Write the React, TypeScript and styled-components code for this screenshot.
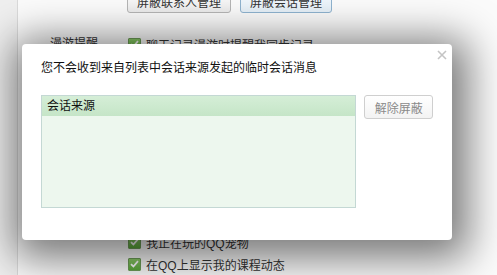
import React from 'react';
import styled, { createGlobalStyle } from 'styled-components';

const GlobalStyle = createGlobalStyle`
  html, body {
    margin: 0;
    padding: 0;
    background: #fbfbfb;
    overflow: hidden;
  }
  body {
    font-family: "Liberation Sans", "Noto Sans CJK SC", sans-serif;
    font-size: 12px;
    color: #333;
  }
`;

const Page = styled.div`
  position: relative;
  width: 497px;
  height: 275px;
  overflow: hidden;
  display: flex;
`;

const Sidebar = styled.div`
  width: 17px;
  flex: none;
  background: #efefef;
  border-right: 1px solid #dadada;
`;

const Settings = styled.div`
  flex: 1;
  display: flex;
  flex-direction: column;
  margin-top: -10px;
`;

const ButtonRow = styled.div`
  display: flex;
  gap: 9px;
  padding-left: 109px;
  height: 46px;
`;

const ManageButton = styled.button<{ $active?: boolean }>`
  height: 23px;
  padding: 0 9px;
  font: inherit;
  font-size: 12px;
  color: #333;
  border: 1px solid ${(p) => (p.$active ? '#8fb3cf' : '#b5b5b5')};
  border-radius: 3px;
  background: ${(p) =>
    p.$active ? 'linear-gradient(#f6fbff, #e6f0f8)' : 'linear-gradient(#ffffff, #ececec)'};
`;

const Section = styled.div`
  display: grid;
  grid-template-columns: 110px 1fr;
`;

const SectionLabel = styled.div`
  padding-left: 32px;
  line-height: 22px;
  color: #333;
`;

const OptionList = styled.div`
  display: flex;
  flex-direction: column;
`;

const Option = styled.label`
  display: flex;
  align-items: center;
  gap: 5px;
  height: 22px;
  color: #333;
`;

const Check = styled.span`
  width: 13px;
  height: 13px;
  flex: none;
  border-radius: 1px;
  background: linear-gradient(#8fcf6a, #5aa83a);
  border: 1px solid #6e9e58;
  box-sizing: border-box;
  display: flex;
  align-items: center;
  justify-content: center;
`;

const Overlay = styled.div`
  position: absolute;
  left: 22px;
  top: 44px;
  width: 430px;
  height: 196px;
  background: #fff;
  border-radius: 4px;
  box-shadow: 4px 7px 40px 12px rgba(0, 0, 0, 0.52);
  box-sizing: border-box;
  padding: 16px 19px;
  display: flex;
  flex-direction: column;
`;

const CloseButton = styled.button`
  position: absolute;
  top: 5px;
  right: 4px;
  width: 12px;
  height: 12px;
  padding: 0;
  border: 0;
  background: none;
  display: flex;
  align-items: center;
  justify-content: center;
`;

const Title = styled.div`
  font-size: 12px;
  line-height: 16px;
  color: #111;
  margin-bottom: 19px;
`;

const Body = styled.div`
  display: flex;
  align-items: flex-start;
  gap: 8px;
`;

const ListBox = styled.div`
  width: 318px;
  height: 113px;
  box-sizing: border-box;
  border: 1px solid #c4d8d4;
  background: #edf7ee;
`;

const ListHeader = styled.div`
  height: 20px;
  line-height: 20px;
  padding-left: 5px;
  color: #111;
  background: linear-gradient(#d5eed7, #c5e5c7);
`;

const UnblockButton = styled.button`
  width: 69px;
  height: 24px;
  font: inherit;
  font-size: 12px;
  color: #8a8a8a;
  border: 1px solid #cfcfcf;
  border-radius: 3px;
  background: linear-gradient(#ffffff, #f3f3f3);
`;

const CheckMark = () => (
  <svg width="9" height="8" viewBox="0 0 9 8">
    <path d="M1 4.2 L3.4 6.5 L8 1.2" fill="none" stroke="#fff" strokeWidth="1.8" />
  </svg>
);

const options = [
  '聊天记录漫游时提醒我同步记录',
  '好友上线时提醒我',
  '收到邮件时提醒我',
  '有新的群消息时提醒我',
  '好友生日时提醒我',
  '有新的空间动态时提醒我',
  '有新的系统消息时提醒我',
  '在QQ上显示我的音乐动态',
  '在QQ上显示我的游戏动态',
  '我正在玩的QQ宠物',
  '在QQ上显示我的课程动态',
];

export default function App() {
  return (
    <>
      <GlobalStyle />
      <Page>
        <Sidebar />
        <Settings>
          <ButtonRow>
            <ManageButton>屏蔽联系人管理</ManageButton>
            <ManageButton $active>屏蔽会话管理</ManageButton>
          </ButtonRow>
          <Section>
            <SectionLabel>漫游提醒</SectionLabel>
            <OptionList>
              {options.map((text) => (
                <Option key={text}>
                  <Check>
                    <CheckMark />
                  </Check>
                  {text}
                </Option>
              ))}
            </OptionList>
          </Section>
        </Settings>
        <Overlay>
          <CloseButton type="button" aria-label="关闭">
            <svg width="10" height="10" viewBox="0 0 10 10">
              <path d="M1 1 L9 9 M9 1 L1 9" stroke="#c4c4c4" strokeWidth="1.6" />
            </svg>
          </CloseButton>
          <Title>您不会收到来自列表中会话来源发起的临时会话消息</Title>
          <Body>
            <ListBox>
              <ListHeader>会话来源</ListHeader>
            </ListBox>
            <UnblockButton type="button">解除屏蔽</UnblockButton>
          </Body>
        </Overlay>
      </Page>
    </>
  );
}
